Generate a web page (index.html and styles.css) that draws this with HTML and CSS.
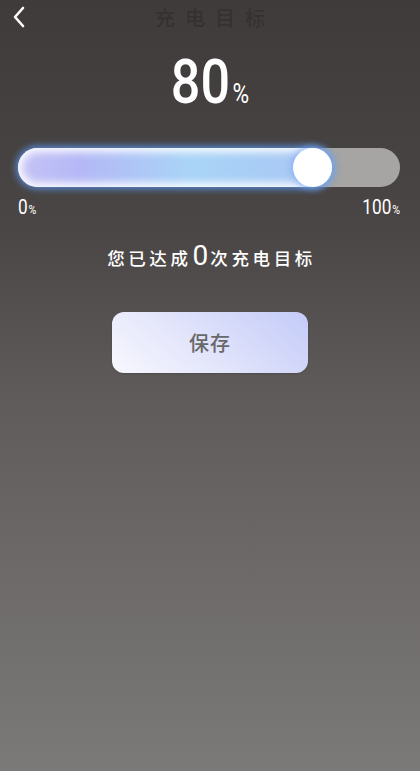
FILE: index.html
```html
<!DOCTYPE html>
<html lang="zh">
<head>
<meta charset="utf-8">
<link rel="stylesheet" href="styles.css">
</head>
<body>
<div class="page">
  <header class="topbar">
    <svg class="back" width="14" height="22" viewBox="0 0 14 22"><path d="M11 2 L3 11 L11 20" fill="none" stroke="#fff" stroke-width="2.6" stroke-linecap="round" stroke-linejoin="round"/></svg>
    <h1 class="title">充电目标</h1>
  </header>
  <div class="value"><span class="num">80</span><span class="pct">%</span></div>
  <div class="slider">
    <div class="track">
      <div class="fill" style="width:82.2%"><span class="knob"></span></div>
    </div>
    <div class="labels">
      <span class="lbl lbl-left">0<small>%</small></span>
      <span class="lbl lbl-right">100<small>%</small></span>
    </div>
  </div>
  <p class="msg">您已达成<span class="count">0</span>次充电目标</p>
  <button class="save">保存</button>
</div>
</body>
</html>
```
FILE: styles.css
```css
html, body { margin: 0; padding: 0; }
body {
  font-family: "Noto Sans CJK SC", "Noto Sans", sans-serif;
  background: linear-gradient(180deg, #3f3b3a 0%, #4a4645 30%, #5e5a59 50%, #6d6a69 75%, #7b7a78 100%);
  min-height: 771px;
  width: 420px;
  overflow: hidden;
}
.page { height: 771px; display: flex; flex-direction: column; }
.topbar {
  position: relative;
  height: 36px;
  display: flex;
  align-items: center;
  justify-content: center;
}
.back { position: absolute; left: 12px; top: 6px; }
.title {
  margin: 0;
  font-size: 20px;
  font-weight: 500;
  color: #353130;
  letter-spacing: 10px;
  padding-left: 10px;
  line-height: 36px;
}
.value {
  margin-top: 16px;
  display: flex;
  justify-content: center;
  align-items: baseline;
  color: #fff;
  font-family: Roboto, sans-serif;
  line-height: 60px;
  height: 60px;
  transform: scaleX(0.84);
}
.num { font-size: 62px; font-weight: 500; }
.pct { font-size: 27px; margin-left: 3px; font-weight: 400; }
.slider { margin: 36px 20px 0 18px; }
.track {
  height: 39px;
  border-radius: 20px;
  background: #a6a5a3;
  position: relative;
}
.fill {
  position: relative;
  height: 100%;
  border-radius: 20px;
  background: linear-gradient(90deg, #c6c4f6 0%, #b4b8f6 20%, #a9d4f7 55%, #a8ccf5 80%, #b4c4f2 100%);
  box-shadow: 0 0 7px 2px rgba(90, 150, 240, 0.85), inset 0 0 9px 4px rgba(255, 255, 255, 0.95);
}
.knob {
  position: absolute;
  right: 0;
  top: 0;
  width: 39px;
  height: 39px;
  border-radius: 50%;
  background: #fff;
  box-shadow: 0 0 6px 2px rgba(120, 170, 245, 0.7);
}
.labels {
  display: flex;
  justify-content: space-between;
  margin-top: 9px;
  color: #fff;
  font-family: Roboto, sans-serif;
  font-size: 21px;
  line-height: 22px;
}
.lbl { display: inline-block; transform: scaleX(0.82); }
.lbl-left { transform-origin: left center; }
.lbl-right { transform-origin: right center; }
.lbl small { font-size: 13px; margin-left: 1px; }
.msg {
  margin: 20px 0 0;
  text-align: center;
  color: #fff;
  font-size: 17.5px;
  font-weight: 500;
  letter-spacing: 3.6px;
  line-height: 30px;
  padding-left: 3px;
}
.count {
  font-family: Roboto, sans-serif;
  font-size: 28px;
  font-weight: 400;
  letter-spacing: 2px;
  margin-left: 1px;
}
.save {
  margin: 39px auto 0;
  width: 196px;
  height: 61px;
  border: none;
  border-radius: 12px;
  background: linear-gradient(40deg, #f8f8fe 0%, #e2e4fb 45%, #c3cbf8 100%);
  color: #686868;
  font-family: "Noto Sans CJK SC", sans-serif;
  font-size: 20px;
  font-weight: 500;
  letter-spacing: 1px;
  box-shadow: 0 1px 2px rgba(0,0,0,0.15);
}
```
